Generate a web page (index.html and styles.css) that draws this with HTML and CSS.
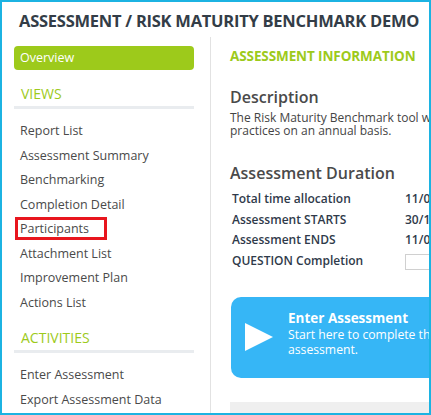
FILE: index.html
```html
<!DOCTYPE html>
<html lang="en">
<head>
    <meta charset="UTF-8">
    <meta name="viewport" content="width=device-width, initial-scale=1.0">
    <title>Assessment / Risk Maturity Benchmark Demo</title>
    <link rel="stylesheet" href="styles.css">
</head>
<body>
<div class="frame">
    <h1 class="page-title">ASSESSMENT / RISK MATURITY BENCHMARK DEMO</h1>
    <div class="layout">
        <aside class="sidebar">
            <a class="btn-overview" href="#">Overview</a>

            <h3 class="nav-head">VIEWS</h3>
            <ul class="nav-list">
                <li><a href="#">Report List</a></li>
                <li><a href="#">Assessment Summary</a></li>
                <li><a href="#">Benchmarking</a></li>
                <li><a href="#">Completion Detail</a></li>
                <li class="marked"><a href="#">Participants</a></li>
                <li><a href="#">Attachment List</a></li>
                <li><a href="#">Improvement Plan</a></li>
                <li><a href="#">Actions List</a></li>
            </ul>

            <h3 class="nav-head">ACTIVITIES</h3>
            <ul class="nav-list">
                <li><a href="#">Enter Assessment</a></li>
                <li><a href="#">Export Assessment Data</a></li>
            </ul>
        </aside>

        <main class="content">
            <h2 class="section-title">ASSESSMENT INFORMATION</h2>

            <h3 class="block-title">Description</h3>
            <p class="desc">The Risk Maturity Benchmark tool will be used to assess risk management<br>practices on an annual basis.</p>

            <h3 class="block-title duration">Assessment Duration</h3>
            <div class="info-table">
                <div class="info-label">Total time allocation</div>
                <div class="info-value">11/02/2020</div>
                <div class="info-label">Assessment STARTS</div>
                <div class="info-value">30/10/2019</div>
                <div class="info-label">Assessment ENDS</div>
                <div class="info-value">11/02/2020</div>
                <div class="info-label">QUESTION Completion</div>
                <div class="info-value"><div class="progress"></div></div>
            </div>

            <a class="enter-card" href="#">
                <svg class="play" width="28" height="28" viewBox="0 0 28 28">
                    <polygon points="0,0 28,14 0,28" fill="#fff"/>
                </svg>
                <div class="enter-text">
                    <div class="enter-title">Enter Assessment</div>
                    <div class="enter-sub">Start here to complete this<br>assessment.</div>
                </div>
            </a>

            <div class="gray-bar"></div>
        </main>
    </div>
</div>
</body>
</html>
```

FILE: styles.css
```css
html, body {
    margin: 0;
    padding: 0;
    background: #fff;
}
body {
    font-family: "Open Sans", Arial, sans-serif;
    color: #444;
}
.frame {
    width: 431px;
    height: 415px;
    box-sizing: border-box;
    border: 2px solid #1cb3e2;
    overflow: hidden;
}
.page-title {
    margin: 0;
    padding: 7px 0 0 17px;
    height: 35px;
    box-sizing: border-box;
    font-family: "Open Sans", Arial, sans-serif;
    font-weight: 700;
    font-size: 16.5px;
    letter-spacing: -0.25px;
    color: #333d47;
    white-space: nowrap;
}
.layout {
    display: flex;
    align-items: stretch;
    height: 378px;
}
.sidebar {
    flex: 0 0 180px;
    padding: 9px 16px 0 12px;
    border-right: 1px solid #e2e2e2;
}
a {
    text-decoration: none;
    color: inherit;
}
.btn-overview {
    display: block;
    height: 24px;
    line-height: 23px;
    padding-left: 6px;
    background: #9dca1b;
    border-radius: 4px;
    color: #fff;
    font-size: 12.5px;
}
.nav-head {
    margin: 15px 0 9px;
    padding: 0 0 3px 7px;
    line-height: 18px;
    font-size: 14px;
    font-weight: 400;
    color: #9dca1b;
    border-bottom: 3px solid #e9ecef;
}
.nav-list {
    list-style: none;
    margin: 0;
    padding: 0;
}
.nav-list li {
    height: 24.5px;
    line-height: 25.5px;
    padding-left: 6px;
    font-size: 12.5px;
    color: #4a4a4a;
    white-space: nowrap;
}
.nav-list li.marked {
    position: relative;
}
.nav-list li.marked::after {
    content: "";
    position: absolute;
    left: 1px;
    top: 1px;
    width: 92px;
    height: 23px;
    box-sizing: border-box;
    border: 3px solid #e8161e;
}
.content {
    flex: 0 0 400px;
    padding: 10px 0 0 19px;
}
.section-title {
    margin: 0;
    font-size: 13.5px;
    font-weight: 700;
    letter-spacing: -0.1px;
    color: #9dca1b;
    line-height: 18px;
}
.block-title {
    margin: 21px 0 0;
    font-size: 16px;
    font-weight: 600;
    line-height: 22px;
    color: #4a4a4a;
}
.desc {
    margin: 3px 0 0;
    font-size: 12px;
    line-height: 13px;
    color: #444;
    white-space: nowrap;
}
.block-title.duration {
    margin-top: 25px;
}
.info-table {
    display: grid;
    grid-template-columns: 173px auto;
    margin: 5px 0 0 2px;
    font-size: 12px;
    font-weight: 600;
    color: #2f3a4a;
    line-height: 20.5px;
    white-space: nowrap;
}
.progress {
    margin-top: 3px;
    width: 120px;
    height: 14px;
    border: 1px solid #d0d0d0;
}
.enter-card {
    display: flex;
    align-items: center;
    gap: 15px;
    margin: 26px 0 0 1px;
    height: 81px;
    padding-left: 14px;
    background: #36b6f6;
    border-radius: 10px;
    color: #fff;
}
.play {
    flex: 0 0 28px;
    margin-top: -2px;
}
.enter-text {
    margin-top: -8px;
}
.enter-title {
    font-size: 13.5px;
    font-weight: 700;
    line-height: 17px;
    margin-bottom: 1px;
}
.enter-sub {
    font-size: 12.2px;
    line-height: 14.5px;
}
.gray-bar {
    margin-top: 24px;
    height: 20px;
    background: #efefef;
}
```
